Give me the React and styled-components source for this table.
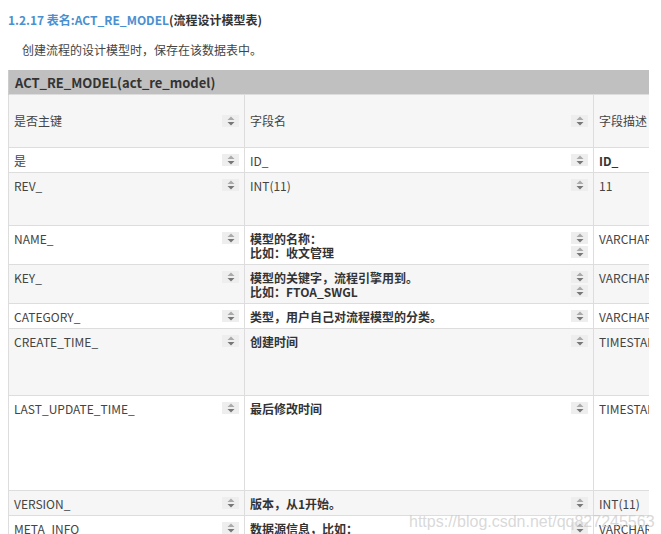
import React from 'react';
import styled, { createGlobalStyle } from 'styled-components';

const Global = createGlobalStyle`
  body {
    margin: 0;
    background: #fff;
    font-family: "Noto Sans CJK SC", "Open Sans", sans-serif;
    font-size: 12px;
    color: #444;
  }
`

const Page = styled.div`
  position: relative;
  width: 661px;
  height: 534px;
  overflow: hidden;
  padding: 11px 0 0 8px;
  box-sizing: border-box;
`
const Title = styled.h4`
  margin: 0;
  font-size: 12px;
  line-height: 18px;
  font-weight: bold;
  color: #333;
`
const Blue = styled.span`
  color: #4a90d0;
`
const Intro = styled.p`
  margin: 12px 0 0 14px;
  font-size: 12px;
  line-height: 18px;
  color: #444;
`
const TableWrap = styled.div`
  margin-top: 11px;
  width: 641px;
  overflow: hidden;
`
const Table = styled.table`
  border-collapse: collapse;
  table-layout: fixed;
  width: 900px;
`
const Caption = styled.th`
  background: #c0c0c0;
  height: 24px;
  padding: 0 6px;
  text-align: left;
  font-weight: bold;
  font-size: 13px;
  color: #333;
  border-left: 1px solid #ccc;
`
const Row = styled.tr`
  background: ${p => (p.$odd ? '#f6f6f6' : '#fff')};
  height: ${p => p.$h}px;
`
const Cell = styled.td`
  border: 1px solid #ddd;
  padding: 0 5px;
  vertical-align: ${p => (p.$middle ? 'middle' : 'top')};
`
const CellInner = styled.div`
  display: flex;
  align-items: ${p => (p.$middle ? 'center' : 'flex-start')};
  padding-top: ${p => (p.$middle ? 0 : 6)}px;
`
const CellText = styled.div`
  flex: 1;
  line-height: 14px;
  white-space: nowrap;
  font-weight: ${p => (p.$bold ? 'bold' : 'normal')};
  color: ${p => (p.$bold ? '#333' : '#444')};
`
const Icons = styled.div`
  display: flex;
  flex-direction: column;
  gap: 2px;
`
const SortBox = styled.span`
  display: flex;
  align-items: center;
  justify-content: center;
  width: 17px;
  height: 12px;
  background: #eee;
`
const Watermark = styled.div`
  position: absolute;
  left: 409px;
  top: 513px;
  font-family: "Liberation Sans", Arial, sans-serif;
  font-size: 16px;
  color: rgba(200, 200, 200, 0.7);
  white-space: nowrap;
  pointer-events: none;
`

const SortIcon = () => (
  <SortBox>
    <svg width="8" height="10" viewBox="0 0 8 10">
      <path d="M4 0.5 L7.5 4 L0.5 4 Z" fill="#aaa" />
      <path d="M4 9.5 L7.5 6 L0.5 6 Z" fill="#777" />
    </svg>
  </SortBox>
)

const Field = ({ text, bold, middle, icons = 1 }) => (
  <Cell $middle={middle}>
    <CellInner $middle={middle}>
      <CellText $bold={bold}>{text}</CellText>
      <Icons>
        {Array.from({ length: icons }).map((_, i) => <SortIcon key={i} />)}
      </Icons>
    </CellInner>
  </Cell>
)

const rows = [
  { h: 25, key: '是', name: 'ID_', desc: 'ID_', descBold: true },
  { h: 53, key: 'REV_', name: 'INT(11)', desc: '11' },
  { h: 39, key: 'NAME_', name: <>模型的名称：<br />比如：收文管理</>, nameBold: true, nameIcons: 2, desc: 'VARCHAR(255)' },
  { h: 39, key: 'KEY_', name: <>模型的关键字，流程引擎用到。<br />比如：FTOA_SWGL</>, nameBold: true, nameIcons: 2, desc: 'VARCHAR(255)' },
  { h: 25, key: 'CATEGORY_', name: '类型，用户自己对流程模型的分类。', nameBold: true, desc: 'VARCHAR(255)' },
  { h: 67, key: 'CREATE_TIME_', name: '创建时间', nameBold: true, desc: 'TIMESTAMP' },
  { h: 95, key: 'LAST_UPDATE_TIME_', name: '最后修改时间', nameBold: true, desc: 'TIMESTAMP' },
  { h: 25, key: 'VERSION_', name: '版本，从1开始。', nameBold: true, desc: 'INT(11)' },
  { h: 39, key: 'META_INFO_', name: <>数据源信息，比如：<br />{'{"name":"FTOA_SWGL"}'}</>, nameBold: true, desc: 'VARCHAR(4000)' },
]

export default function App() {
  return (
    <Page>
      <Global />
      <Title>
        <Blue>1.2.17 表名:ACT_RE_MODEL</Blue>(流程设计模型表)
      </Title>
      <Intro>创建流程的设计模型时，保存在该数据表中。</Intro>
      <TableWrap>
        <Table>
          <colgroup>
            <col style={{ width: 236 }} />
            <col style={{ width: 349 }} />
            <col style={{ width: 315 }} />
          </colgroup>
          <thead>
            <tr>
              <Caption colSpan={3}>ACT_RE_MODEL(act_re_model)</Caption>
            </tr>
          </thead>
          <tbody>
            <Row $odd $h={53}>
              <Field text="是否主键" middle />
              <Field text="字段名" middle />
              <Field text="字段描述" middle />
            </Row>
            {rows.map((r, i) => (
              <Row key={r.key} $odd={i % 2 === 1} $h={r.h}>
                <Field text={r.key} />
                <Field text={r.name} bold={r.nameBold} icons={r.nameIcons} />
                <Field text={r.desc} bold={r.descBold} />
              </Row>
            ))}
          </tbody>
        </Table>
      </TableWrap>
      <Watermark>https://blog.csdn.net/qq827245563</Watermark>
    </Page>
  );
}
